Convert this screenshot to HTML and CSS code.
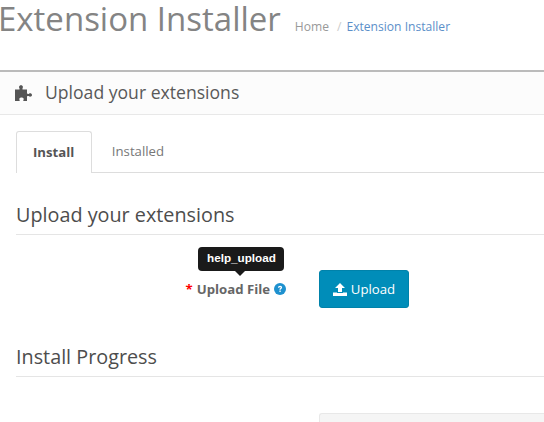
FILE: index.html
```html
<!DOCTYPE html>
<html lang="en">
<head>
  <meta charset="UTF-8" />
  <title>Extension Installer</title>
  <link rel="stylesheet" href="styles.css">
</head>
<body>
  <div class="page-header">
    <h1>Extension Installer</h1>
    <ul class="breadcrumb">
      <li><a href="#">Home</a></li>
      <li class="sep">/</li>
      <li><a class="current" href="#">Extension Installer</a></li>
    </ul>
  </div>

  <div class="panel">
    <div class="panel-heading">
      <svg class="icon-puzzle" viewBox="0 0 17 16" width="17" height="16" aria-hidden="true">
        <path d="M0 4.500H4.500V3.200C3.800 2.800 3.800 .3 6 .3S8.200 2.800 7.500 3.200V4.500H12V8.600C12.600 9 13.500 9.200 14 8.700 15 7.800 17 8.500 17 10S15 12.200 14 11.300C13.500 10.800 12.600 11 12 11.400V16H8.300C8.200 15.300 8.700 14.900 8.700 14 8.700 13 7.500 12.500 6.500 12.500S4.300 13 4.300 14C4.300 14.900 4.800 15.300 4.700 16H0Z" fill="#555"/>
      </svg>
      <h3>Upload your extensions</h3>
    </div>
    <div class="panel-body">
      <ul class="tabs">
        <li class="tab active">Install</li>
        <li class="tab">Installed</li>
      </ul>

      <fieldset>
        <legend>Upload your extensions</legend>
        <div class="form-row">
          <div class="label-col">
            <label>
              <span class="req">*</span> Upload File
              <svg class="icon-help" viewBox="0 0 12 12" width="12" height="12" aria-hidden="true">
                <circle cx="6" cy="6" r="6" fill="#1e91cf"/>
                <path d="M4 4.700c0-1.200.9-1.900 2.100-1.900s2 .7 2 1.700c0 1.300-1.400 1.300-1.400 2.300H5.400c0-1.500 1.300-1.500 1.300-2.200 0-.3-.3-.6-.7-.6s-.7.300-.7.700zM5.400 7.600h1.300v1.400H5.400z" fill="#fff"/>
              </svg>
              <span class="tooltip">help_upload</span>
            </label>
          </div>
          <button class="btn-upload" type="button">
            <svg class="icon-upload" viewBox="0 0 14 13" width="14" height="13" aria-hidden="true">
              <path d="M7 0 12 5H9V9H5V5H2zM0 9.500H4V10H10V9.500H14V13H0z" fill="#fff"/>
            </svg>
            Upload
          </button>
        </div>
      </fieldset>

      <fieldset>
        <legend>Install Progress</legend>
        <div class="form-row">
          <div class="label-col"></div>
          <div class="progress"></div>
        </div>
      </fieldset>
    </div>
  </div>
</body>
</html>
```

FILE: styles.css
```css
html, body {
  height: 100%;
  overflow: hidden;
}

body {
  margin: 0;
  background: #fff;
  font-family: "Open Sans", sans-serif;
  font-size: 13.2px;
  color: #666;
}

.page-header {
  display: flex;
  align-items: center;
  height: 70px;
  box-sizing: border-box;
  padding-bottom: 32px;
}

h1 {
  margin: 0 0 0 -2px;
  font-size: 33px;
  font-weight: 400;
  line-height: 38px;
  color: #848484;
  white-space: nowrap;
}

.breadcrumb {
  display: flex;
  list-style: none;
  margin: 14px 0 0 14px;
  padding: 0;
  font-size: 12.1px;
}

.breadcrumb a {
  color: #999;
  text-decoration: none;
}

.breadcrumb a.current {
  color: #5b8fc9;
}

.breadcrumb .sep {
  padding: 0 5px 0 8px;
  color: #ccc;
}

.panel {
  border-top: 2px solid #bbb;
}

.panel-heading {
  display: flex;
  align-items: center;
  height: 42px;
  padding: 0 15px;
  background: #fcfcfc;
  border-bottom: 1px solid #e8e8e8;
}

.panel-heading h3 {
  margin: -2px 0 0 13px;
  font-size: 17.6px;
  font-weight: 400;
  color: #595959;
}

.panel-body {
  padding: 16px 0 0 16px;
}

.tabs {
  display: flex;
  list-style: none;
  margin: 0 0 27px;
  padding: 0;
  height: 41px;
  border-bottom: 1px solid #ddd;
}

.tab {
  padding: 0 19.500px;
  line-height: 41px;
  color: #777;
}

.tab.active {
  padding: 0 17px 0 16px;
  height: 41px;
  color: #555;
  font-weight: 700;
  background: #fff;
  border: 1px solid #ddd;
  border-bottom: 0;
  border-radius: 3px 3px 0 0;
}

fieldset {
  margin: 0;
  padding: 0;
  border: 0;
}

legend {
  display: block;
  width: 100%;
  padding: 0 0 5px;
  font-size: 19.800px;
  line-height: 29px;
  color: #4d4d4d;
  border-bottom: 1px solid #e5e5e5;
}

.form-row {
  display: flex;
  align-items: center;
  margin: 35px 0 34px;
}

.label-col {
  display: flex;
  justify-content: flex-end;
  flex: none;
  width: 270px;
}

label {
  position: relative;
  display: flex;
  align-items: center;
  gap: 4px;
  font-weight: 700;
  color: #666;
  white-space: nowrap;
}

.req {
  color: #f00;
}

.tooltip {
  position: absolute;
  left: 13px;
  bottom: 27px;
  width: 86px;
  height: 24px;
  background: #1a1a1a;
  border-radius: 4px;
  color: #fff;
  font-family: "Liberation Sans", sans-serif;
  font-size: 11.700px;
  line-height: 22px;
  text-align: center;
}

.tooltip::after {
  content: "";
  position: absolute;
  left: 37px;
  top: 24px;
  border: 5px solid transparent;
  border-top-color: #1a1a1a;
  border-bottom: 0;
}

.btn-upload {
  display: flex;
  align-items: center;
  justify-content: center;
  gap: 4px;
  flex: none;
  width: 90px;
  height: 38px;
  margin-left: 33px;
  padding: 0;
  background: #008db9;
  border: 1px solid #0082aa;
  border-radius: 3px;
  color: #fff;
  font-family: "Open Sans", sans-serif;
  font-size: 13.200px;
}

.progress {
  flex: 1;
  height: 20px;
  margin: 1px 0 0 33px;
  background: #f5f5f5;
  border: 1px solid #e8e8e8;
  border-right: 0;
  border-radius: 3px 0 0 3px;
}
```
